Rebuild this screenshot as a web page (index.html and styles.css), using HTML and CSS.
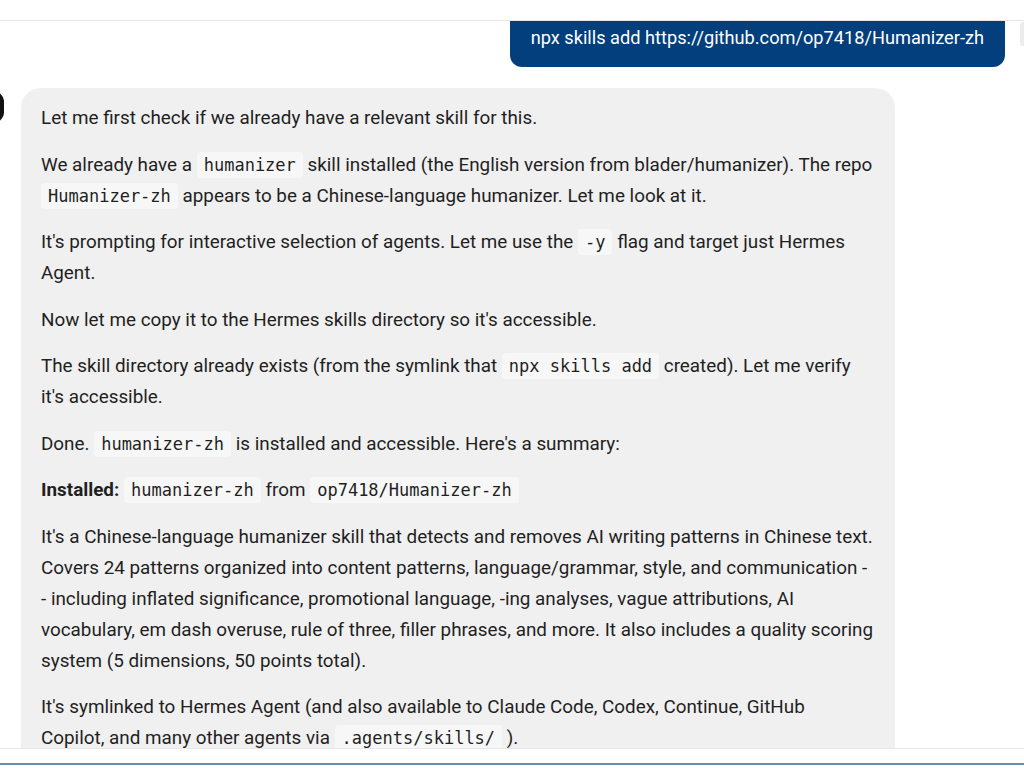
FILE: index.html
```html
<!DOCTYPE html>
<html lang="en">
<head>
    <meta charset="UTF-8">
    <meta name="viewport" content="width=device-width, initial-scale=1.0">
    <title>Hermes Agent</title>
    <link rel="stylesheet" href="styles.css">
</head>
<body>
    <div class="topbar"></div>
    <div class="scroll-tab"></div>

    <div class="chat">
        <div class="chat-inner">
            <div class="row row-user">
                <div class="bubble-user">npx skills add https://github.com/op7418/Humanizer-zh</div>
            </div>

            <div class="row row-agent">
                <div class="avatar"></div>
                <div class="bubble-agent">
                    <p>Let me first check if we already have a relevant skill for this.</p>
                    <p>We already have a <code>humanizer</code> skill installed (the English version from blader/humanizer). The repo <code>Humanizer-zh</code> appears to be a Chinese-language humanizer. Let me look at it.</p>
                    <p>It's prompting for interactive selection of agents. Let me use the <code>-y</code> flag and target just Hermes Agent.</p>
                    <p>Now let me copy it to the Hermes skills directory so it's accessible.</p>
                    <p>The skill directory already exists (from the symlink that <code>npx skills add</code> created). Let me verify it's accessible.</p>
                    <p>Done. <code>humanizer-zh</code> is installed and accessible. Here's a summary:</p>
                    <p><strong>Installed:</strong> <code>humanizer-zh</code> from <code>op7418/Humanizer-zh</code></p>
                    <p>It's a Chinese-language humanizer skill that detects and removes AI writing patterns in Chinese text. Covers 24 patterns organized into content patterns, language/grammar, style, and communication -<br>- including inflated significance, promotional language, -ing analyses, vague attributions, AI vocabulary, em dash overuse, rule of three, filler phrases, and more. It also includes a quality scoring system (5 dimensions, 50 points total).</p>
                    <p>It's symlinked to Hermes Agent (and also available to Claude Code, Codex, Continue, GitHub<br>Copilot, and many other agents via <code>.agents/skills/</code> ).</p>
                </div>
            </div>
        </div>
    </div>

    <div class="composer">
        <div class="composer-line"></div>
    </div>
</body>
</html>
```

FILE: styles.css
```css
* {
    margin: 0;
    padding: 0;
    box-sizing: border-box;
}

body {
    font-family: Roboto, "Noto Sans", sans-serif;
    background-color: #ffffff;
    color: #1f1f1f;
    height: 768px;
    overflow: hidden;
    position: relative;
}

.topbar {
    height: 21px;
    border-bottom: 1px solid #e6e6e6;
}

/* thin grey tab peeking in at the right edge */
.scroll-tab {
    position: absolute;
    top: 22px;
    right: -4px;
    width: 8px;
    height: 24px;
    border-radius: 3px;
    background-color: #ececec;
}

.chat {
    height: 727px;
    overflow: hidden;
}

/* the conversation is scrolled a little past the user message */
.chat-inner {
    margin-top: -12px;
}

.row {
    display: flex;
}

.row-user {
    justify-content: flex-end;
    padding-right: 19px;
}

.bubble-user {
    background-color: #023f7c;
    color: #ffffff;
    font-size: 18.2px;
    line-height: 24px;
    padding: 17px 21px;
    border-radius: 12px;
}

.row-agent {
    margin-top: 21px;
    align-items: flex-start;
    gap: 17px;
}

.avatar {
    width: 32px;
    height: 32px;
    margin-left: -28px;
    margin-top: 3px;
    border-radius: 11px;
    background-color: #111111;
    flex-shrink: 0;
}

.bubble-agent {
    width: 874px;
    background-color: #f0f0f0;
    border-radius: 20px;
    padding: 15px 20px 30px;
    font-size: 18.85px;
    line-height: 31px;
}

.bubble-agent p {
    margin-bottom: 15.55px;
}

.bubble-agent strong {
    font-weight: 700;
}

.bubble-agent code {
    font-family: "DejaVu Sans Mono", "Liberation Mono", monospace;
    font-size: 17px;
    line-height: 1;
    background-color: #f7f7f7;
    border-radius: 4px;
    padding: 3px 7px;
}

.composer {
    height: 20px;
    border-top: 1px solid #e8e8e8;
    padding-top: 14px;
}

.composer-line {
    height: 2px;
    background-color: #6b8db2;
}
```
